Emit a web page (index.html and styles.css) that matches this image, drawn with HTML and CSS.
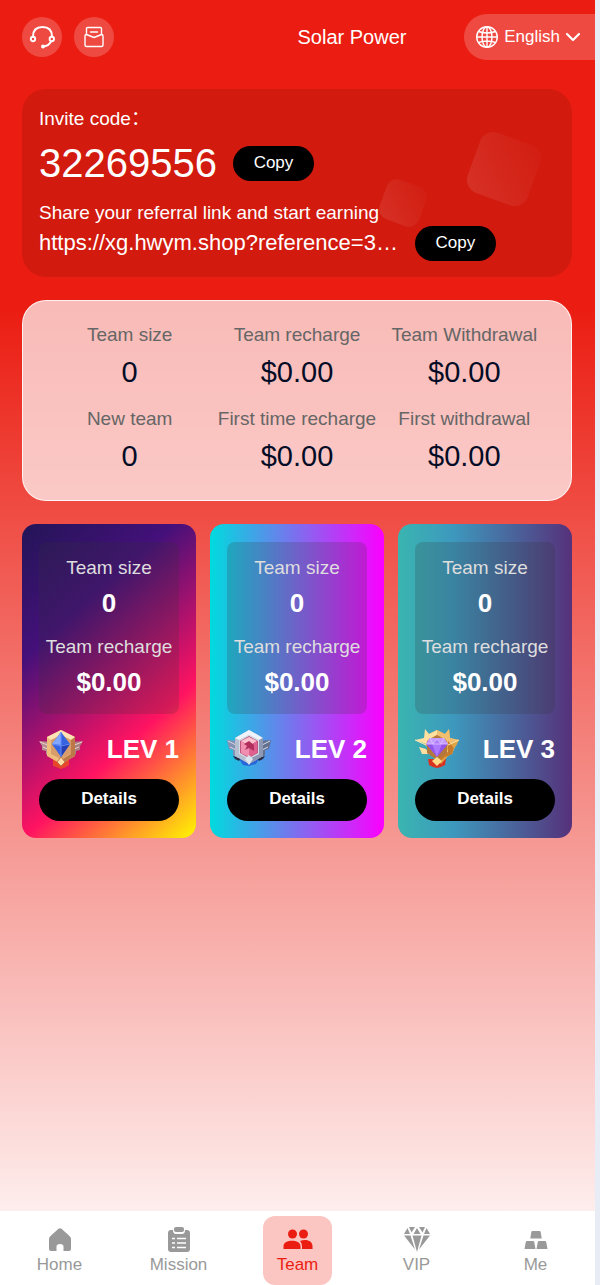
FILE: index.html
```html
<!DOCTYPE html>
<html lang="en">
<head>
<meta charset="utf-8">
<meta name="viewport" content="width=device-width, initial-scale=1">
<title>Solar Power</title>
<link rel="stylesheet" href="styles.css">
</head>
<body>
<div class="app">
  <header class="topbar">
    <div class="tools">
      <button class="round" type="button" aria-label="Support">
        <svg width="26" height="26" viewBox="0 0 26 26" fill="none" stroke="#fff" stroke-width="1.9" stroke-linecap="round"><path d="M4 12.500C4 6 8 3 13.500 3s9.500 3 9.500 9.500M22 17.500c-1.500 3-4 4.700-8 5"/><circle cx="4" cy="15" r="2.200"/><circle cx="22.800" cy="15" r="2.200"/><circle cx="14" cy="22.500" r="1" fill="#fff"/></svg>
      </button>
      <button class="round" type="button" aria-label="Messages">
        <svg width="22" height="22" viewBox="0 0 22 22" fill="none" stroke="#fff" stroke-width="1.400" stroke-linejoin="round" stroke-linecap="round"><path d="M3.500 8.500V2.500Q3.500 1.500 4.500 1.500h13Q18.500 1.500 18.500 2.500v6M7.500 6h7M2 10q0-1.500 1.500-1.500L11 11.500l7.500-3Q20 8.500 20 10v9q0 1.500-1.500 1.500h-15Q2 20.500 2 19z"/></svg>
      </button>
    </div>
    <div class="heading">
      <h1 class="title">Solar Power</h1>
      <button class="language" type="button">
        <svg width="24" height="24" viewBox="0 0 24 24" fill="none" stroke="#fff" stroke-width="1.400"><circle cx="12" cy="12" r="10.300"/><ellipse cx="12" cy="12" rx="5" ry="10.300"/><path d="M12 1.700v20.600M1.700 12h20.600M3.500 6.500q8.500 3 17 0M3.500 17.500q8.500-3 17 0"/></svg>
        <span>English</span>
        <svg width="16" height="10" viewBox="0 0 16 10" fill="none" stroke="#fff" stroke-width="2.200" stroke-linecap="round" stroke-linejoin="round"><path d="M2 2l6 6 6-6"/></svg>
      </button>
    </div>
  </header>

  <main class="content">
    <section class="invite">
      <span class="tile tile-large"></span>
      <span class="tile tile-small"></span>
      <p class="caption">Invite code：</p>
      <div class="code-row">
        <span class="code">32269556</span>
        <button class="copy" type="button">Copy</button>
      </div>
      <p class="caption">Share your referral link and start earning</p>
      <div class="link-row">
        <span class="link">https://xg.hwym.shop?reference=3…</span>
        <button class="copy" type="button">Copy</button>
      </div>
    </section>

    <dl class="stats">
      <div><dt>Team size</dt><dd>0</dd></div>
      <div><dt>Team recharge</dt><dd>$0.00</dd></div>
      <div><dt>Team Withdrawal</dt><dd>$0.00</dd></div>
      <div><dt>New team</dt><dd>0</dd></div>
      <div><dt>First time recharge</dt><dd>$0.00</dd></div>
      <div><dt>First withdrawal</dt><dd>$0.00</dd></div>
    </dl>

    <section class="levels">
      <article class="level level-one">
        <dl class="totals">
          <dt>Team size</dt><dd>0</dd>
          <dt>Team recharge</dt><dd>$0.00</dd>
        </dl>
        <div class="rank">
          <svg width="44" height="40" viewBox="0 0 44 40">
            <path d="M14 29h16v7l-3 2-5 2-5-2-3-1z" fill="#e8452a"/>
            <path d="M0 12l11 1v15l-4-3v-3l-4-1v-4z" fill="#b88f92"/><path d="M44 12l-11 1v15l4-3v-3l4-1v-4z" fill="#a87f83"/>
            <path d="M1 13l10 4M4 18l7 3M43 13l-10 4M40 18l-7 3" stroke="#efd0c4"/>
            <path d="M22 1l14 7v19L22 35 8 27V8z" fill="#efbd7c"/><path d="M22 1l14 7-4 3-10-5-10 5-4-3z" fill="#ffe3b4"/><path d="M36 8v19l-14 8v-4l10-6V11z" fill="#bd784a"/>
            <path d="M22 6l10 5v14l-10 5-10-5V11z" fill="#d99c6b"/>
            <path d="M22 3l9 12-9 13-9-13z" fill="#3663df"/><path d="M22 3v13l-9-1z" fill="#83a7ff"/><path d="M22 16l9-1-9 13z" fill="#233fb2"/><path d="M22 3v25M13 15l9 2 9-2" stroke="#638bff" fill="none"/>
            <path d="M22 28l4 5-4 4-4-4z" fill="#ffdca7" stroke="#bd7547"/>
          </svg>
          <h2>LEV 1</h2>
        </div>
        <button class="details" type="button">Details</button>
      </article>
      <article class="level level-two">
        <dl class="totals">
          <dt>Team size</dt><dd>0</dd>
          <dt>Team recharge</dt><dd>$0.00</dd>
        </dl>
        <div class="rank">
          <svg width="44" height="40" viewBox="0 0 44 40">
            <path d="M12 30h20l-3 5-4 1-3 1-6-1z" fill="#2865d8"/><path d="M6 27l8 2-2 3-4-2zM38 27l-8 2 2 3 4-2z" fill="#272e48"/>
            <path d="M0 11l11 1v17l-5-3v-5l-4-1z" fill="#8492b3"/><path d="M44 11l-11 1v17l5-3v-5l4-1z" fill="#65708f"/>
            <path d="M1 12l10 5M3 18l8 4M43 12l-10 5M41 18l-8 4" stroke="#d3dae8"/>
            <path d="M22 1l14 8v18l-14 8-14-8V9z" fill="#b5bfd0"/><path d="M22 1l14 8-4 2-10-5-10 5-4-2z" fill="#edf3f8"/><path d="M36 9v18l-14 8v-5l10-5V11z" fill="#8d98b4"/>
            <path d="M22 6l10 5v14l-10 5-10-5V11z" fill="#d5dbe6"/><path d="M22 7l9 5v12l-9 5-9-5V12z" fill="#bd557d"/><path d="M22 8l8 4-8 5-8-5z" fill="#f9c4ce"/><path d="M14 12l8 5v11l-8-4z" fill="#f08fb0"/><path d="M30 12l-8 5v11l8-4z" fill="#e0608f"/><path d="M17 15l5-3 5 4v6l-5-3-4 2 2-4z" fill="#b02f5d"/>
            <path d="M22 26l4 4-4 6-4-6z" fill="#dce5ee"/>
          </svg>
          <h2>LEV 2</h2>
        </div>
        <button class="details" type="button">Details</button>
      </article>
      <article class="level level-three">
        <dl class="totals">
          <dt>Team size</dt><dd>0</dd>
          <dt>Team recharge</dt><dd>$0.00</dd>
        </dl>
        <div class="rank">
          <svg width="44" height="40" viewBox="0 0 44 40">
            <path d="M13 30h18l-1 6-4 2-4 1-4-1-4-2z" fill="#d83220"/>
            <path d="M10 0l4 5 8-4 8 4 4-5 1 9 9 2-3 6-2 2-2 6-4 2-7 8-7-8-4-2-2-6-2-2-3-6 9-2z" fill="#e2a447"/>
            <path d="M10 0l4 5 8-4v5l-8 4-3 5-11-4 9-2zM4 18l7 2 3 5-7 0z" fill="#ffe0a0"/>
            <path d="M34 0l-4 5-8-4v5l8 4 3 5 11-4-9-2zM40 18l-7 2-3 5h7z" fill="#f0c070"/>
            <path d="M33 12v11l-11 7v5l8-7 7-3 2-6z" fill="#c57b2a"/>
            <path d="M22 6l10 6v12l-10 7-10-7V12z" fill="#b5783c"/>
            <path d="M15 9h14l4 6-11 13-11-13z" fill="#9355e9"/><path d="M15 9h14l4 6H11z" fill="#c49cff"/><path d="M17 15l5 13 5-13-5-5z" fill="#ad7aff"/><path d="M11 15h22M15 9l3 6 4-5 4 5 3-6" stroke="#ddc5ff" stroke-width=".8" fill="none"/>
            <path d="M0 11l11 5M44 11l-11 5" stroke="#ffe7ae"/><path d="M22 28l5 4-5 5-5-5z" fill="#ffdb89"/>
          </svg>
          <h2>LEV 3</h2>
        </div>
        <button class="details" type="button">Details</button>
      </article>
    </section>
  </main>

  <nav class="tabs">
    <a class="tab" href="#home">
      <svg width="26" height="26" viewBox="0 0 26 26"><path d="M11.500 1.800Q13 .8 14.500 1.800L22.500 9Q24 10.500 24 12v10Q24 24 22 24h-5.500v-4.500Q16.500 17 13 17t-3.500 2.500V24H4Q2 24 2 22V12q0-1.500 1.500-3z" fill="currentColor"/></svg>
      <span>Home</span>
    </a>
    <a class="tab" href="#mission">
      <svg width="26" height="26" viewBox="0 0 26 26"><path d="M5 3h2q0 4 3 4h6q3 0 3-4h2q3 0 3 3v16q0 3-3 3H5q-3 0-3-3V6q0-3 3-3z" fill="currentColor"/><rect x="8" y="0" width="10" height="5" rx="2" fill="currentColor"/><path d="M6 11.500h3M11 11.500h9M6 16h3M11 16h9M6 20.500h3M11 20.500h9" stroke="#fff" stroke-width="1.700"/></svg>
      <span>Mission</span>
    </a>
    <a class="tab tab-active" href="#team" aria-current="page">
      <svg width="30" height="26" viewBox="0 0 30 26" fill="currentColor"><circle cx="9.500" cy="7" r="4.500"/><circle cx="20.500" cy="7" r="4.500"/><path d="M.5 22v-3c0-7 17-7 17 0v3zM19 22v-3q0-3-2-5c6-2.500 12.500-.5 12.500 5v3z"/></svg>
      <span>Team</span>
    </a>
    <a class="tab" href="#vip">
      <svg width="28" height="26" viewBox="0 0 28 26" fill="currentColor"><path d="M6 0h6L8.500 5.500zM16 0h6l-2.500 5.500zM14 1l3.500 6h-7zM4.500 1L7 7H1zM23.500 1L27 7h-6zM1 8.500h6.500l4.500 14zM9.500 8.500h9L14 25zM20.500 8.500H27L16 22.500z"/></svg>
      <span>VIP</span>
    </a>
    <a class="tab" href="#me">
      <svg width="24" height="26" viewBox="0 0 24 26" fill="currentColor"><path d="M8.500 4h7q1 0 1.200 1l1 6.500H6.300l1-6.500q.2-1 1.200-1zM3 14h6q1 0 1.200.8L11.500 22H.5l1.300-7q.2-1 1.200-1zM15 14h6q1 0 1.200 1l1.300 7h-11l1.300-7q.2-1 1.200-1z"/></svg>
      <span>Me</span>
    </a>
  </nav>
</div>
</body>
</html>
```
FILE: styles.css
```css
* { box-sizing: border-box; }

body {
  margin: 0;
  padding-right: 5px;
  background: #e8edf5;
  color: #fff;
  font-family: "Liberation Sans", Arial, "Noto Sans CJK SC", sans-serif;
}

button {
  border: 0;
  padding: 0;
  color: inherit;
  font: inherit;
  cursor: pointer;
}

p, h1, h2, dl, dd { margin: 0; }

svg { display: block; flex: none; }

.app {
  display: flex;
  flex-direction: column;
  min-height: 100vh;
  background: linear-gradient(#eb1d12 24%, #fff 100%);
}

.topbar {
  display: grid;
  grid-template-columns: 1fr 1fr;
  align-items: center;
  padding-top: 14px;
}

.tools {
  display: flex;
  gap: 12px;
  padding-left: 22px;
}

.round {
  display: grid;
  place-items: center;
  width: 40px;
  height: 40px;
  border-radius: 50%;
  background: rgba(255, 255, 255, .2);
}

.heading {
  display: flex;
  align-items: center;
  justify-content: space-between;
}

.title {
  font-size: 20px;
  font-weight: 400;
}

.language {
  display: flex;
  align-items: center;
  gap: 5px;
  height: 46px;
  padding: 0 14px 0 11px;
  border-radius: 23px 0 0 23px;
  background: rgba(255, 255, 255, .2);
  font-size: 17px;
}

.content {
  display: flex;
  flex: 1;
  flex-direction: column;
  gap: 23px;
  padding: 29px 23px 24px 22px;
}

.invite {
  position: relative;
  padding: 18px 17px 16px;
  border-radius: 24px;
  background: #d21a0e;
}

.caption {
  position: relative;
  font-size: 19px;
  line-height: 24px;
}

.code-row, .link-row {
  position: relative;
  display: flex;
  align-items: center;
}

.code-row {
  gap: 16px;
  height: 64px;
  margin-bottom: 6px;
}

.link-row {
  gap: 17px;
  height: 36px;
}

.code {
  font-size: 40px;
}

.link {
  font-size: 22px;
}

.copy {
  width: 81px;
  height: 35px;
  border-radius: 18px;
  background: #000;
  font-size: 17px;
}

.tile {
  position: absolute;
  background: linear-gradient(45deg, rgba(255, 255, 255, .1), rgba(255, 255, 255, .01));
  transform: rotate(20deg);
}

.tile-large {
  top: 48px;
  right: 36px;
  width: 64px;
  height: 64px;
  border-radius: 14px;
}

.tile-small {
  top: 93px;
  right: 148px;
  width: 42px;
  height: 42px;
  border-radius: 11px;
}

.stats {
  display: grid;
  grid-template-columns: repeat(3, 1fr);
  row-gap: 10px;
  padding: 20px 23px 21px;
  border: 1px solid rgba(255, 255, 255, .8);
  border-radius: 24px;
  background: rgba(255, 255, 255, .7);
  text-align: center;
  white-space: nowrap;
}

.stats dt {
  color: #666;
  font-size: 19px;
  line-height: 28px;
}

.stats dd {
  color: #030c26;
  font-size: 29px;
  line-height: 46px;
}

.levels {
  display: grid;
  grid-template-columns: repeat(3, 1fr);
  gap: 14px;
}

.level {
  padding: 18px 17px 17px;
  border-radius: 14px;
}

.level-one { background: linear-gradient(138deg, #231557 0%, #44107a 29%, #ff1361 67%, #fff800 100%); }
.level-two { background: linear-gradient(to right, #00dbde, #fc00ff); }
.level-three { background: linear-gradient(to right, #3ab5b0 0%, #3d99be 31%, #56317a 100%); }

.totals {
  padding: 10px 0 13px;
  border-radius: 8px;
  background: rgba(51, 51, 51, .2);
  text-align: center;
  white-space: nowrap;
}

.totals dt {
  color: #dedede;
  font-size: 19px;
  line-height: 32px;
}

.totals dd {
  font-size: 26px;
  font-weight: 700;
  line-height: 38px;
}

.totals dd + dt { padding-top: 9px; }

.rank {
  display: flex;
  align-items: center;
  justify-content: space-between;
  height: 65px;
  padding-top: 5px;
}

.rank h2 {
  font-size: 26px;
  line-height: 32px;
}

.details {
  display: block;
  width: 100%;
  height: 42px;
  padding-bottom: 3px;
  border-radius: 21px;
  background: #000;
  font-size: 17px;
  font-weight: 700;
}

.tabs {
  display: grid;
  grid-template-columns: repeat(5, 1fr);
  justify-items: center;
  padding-top: 5px;
  background: #fff;
}

.tab {
  display: flex;
  flex-direction: column;
  align-items: center;
  gap: 1px;
  min-width: 69px;
  height: 69px;
  padding-top: 11px;
  border-radius: 12px;
  color: #999;
  font-size: 17px;
  line-height: 22px;
  text-decoration: none;
}

.tab-active {
  background: #fbc5c2;
  color: #eb1d12;
}
```
